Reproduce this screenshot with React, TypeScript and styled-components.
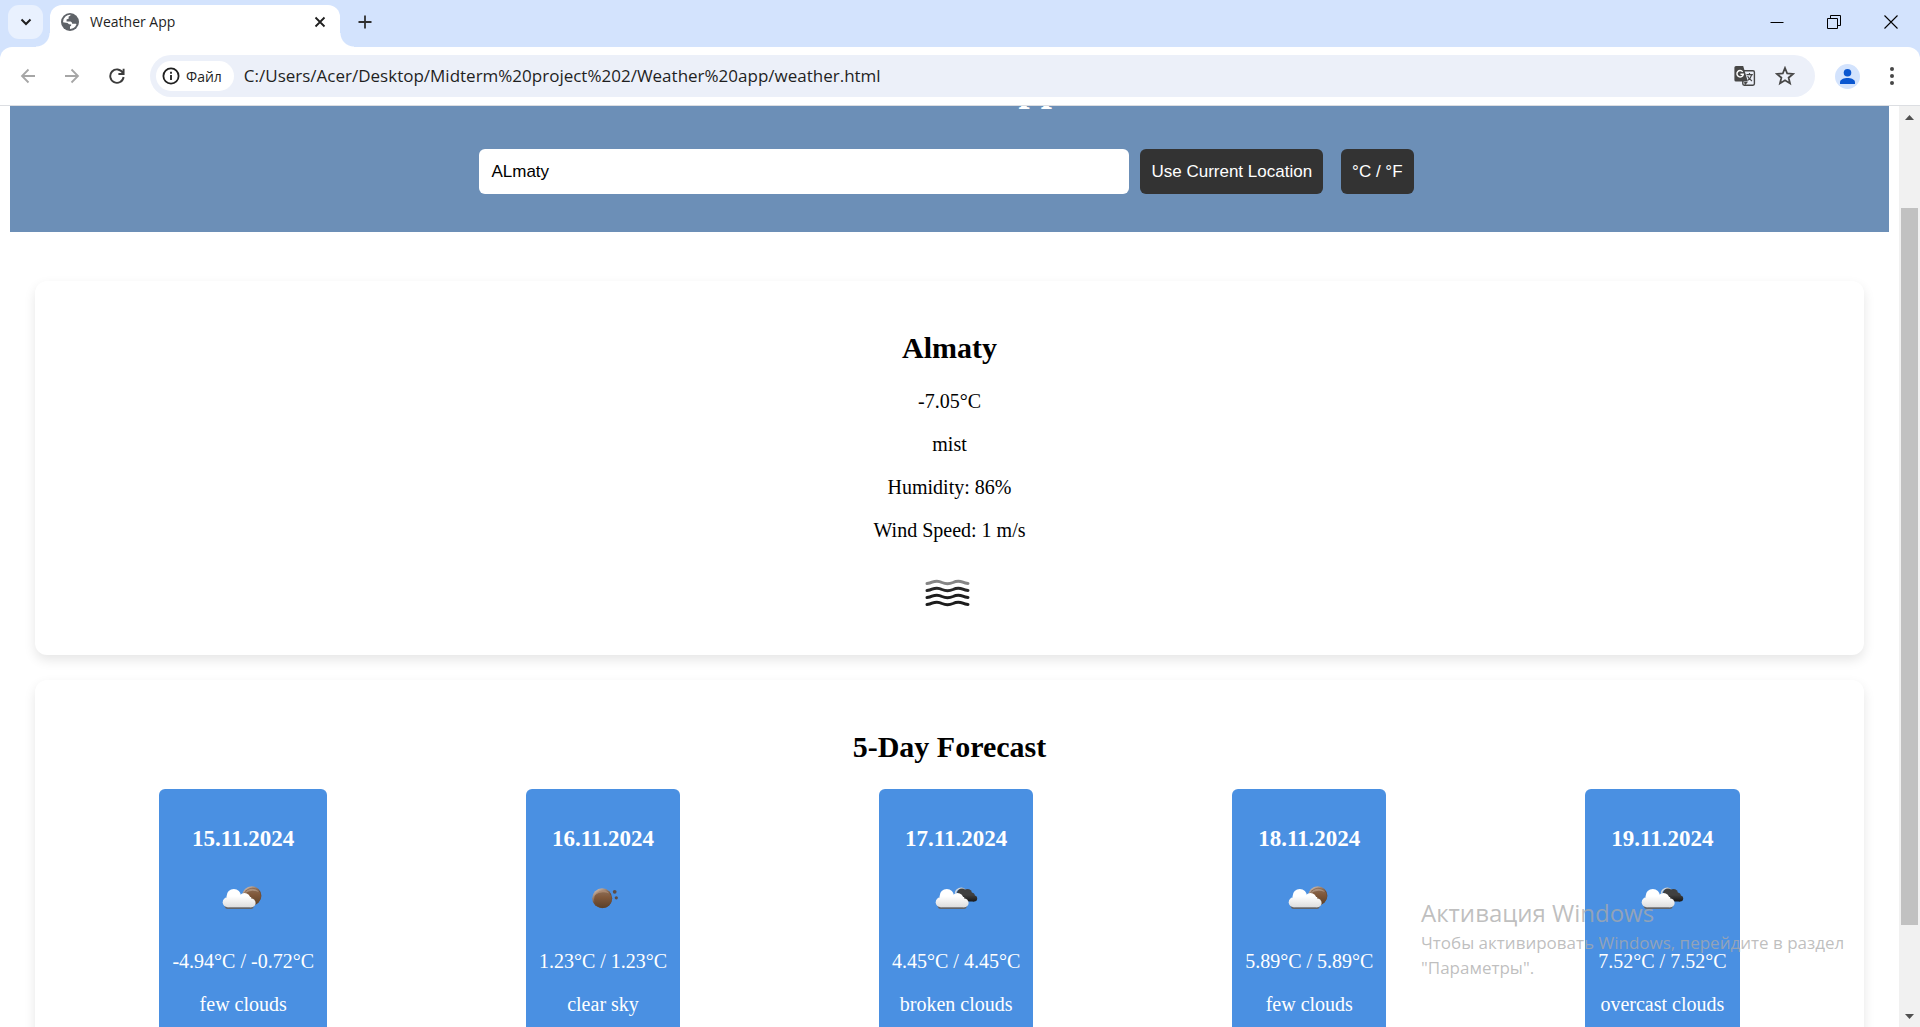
import React, { useLayoutEffect, useRef, useState } from "react";
import styled, { createGlobalStyle } from "styled-components";

const UI_FONT = `"Open Sans", "Noto Sans", sans-serif`;
const PAGE_FONT = `"Liberation Serif", "Times New Roman", serif`;
const CONTROL_FONT = `"Liberation Sans", Arial, sans-serif`;

const GlobalStyle = createGlobalStyle`
  *, *::before, *::after { box-sizing: border-box; }
  body { margin: 0; background: #fff; }
  button, input { font: inherit; border: 0; margin: 0; }
  button { cursor: pointer; }
`;

/* ---------- browser window ---------- */

const Window = styled.div`
  position: relative;
  display: flex;
  flex-direction: column;
  height: 100vh;
  overflow: hidden;
  font-family: ${UI_FONT};
  background: #d3e3fd;
`;

const TabStrip = styled.div`
  display: flex;
  align-items: flex-end;
  height: 47px;
  padding-left: 8px;
`;

const TabSearch = styled.button`
  display: grid;
  place-items: center;
  align-self: flex-start;
  width: 35px;
  height: 34px;
  margin: 5px 7px 0 0;
  padding: 0;
  border-radius: 11px;
  background: #e9f1fe;
`;

const Tab = styled.div`
  position: relative;
  display: flex;
  align-items: center;
  width: 290px;
  height: 42px;
  padding: 0 11px 8px 11px;
  border-radius: 12px 12px 0 0;
  background: #fff;

  &::before,
  &::after {
    content: "";
    position: absolute;
    bottom: 0;
    width: 14px;
    height: 14px;
  }
  &::before {
    right: 100%;
    background: radial-gradient(circle at 0 0, transparent 13px, #fff 14px);
  }
  &::after {
    left: 100%;
    background: radial-gradient(circle at 100% 0, transparent 13px, #fff 14px);
  }
`;

const TabTitle = styled.span`
  flex: 1;
  margin-left: 11px;
  font-size: 14px;
  line-height: 20px;
  color: #1f1f1f;
`;

const IconButton = styled.button<{ $w?: number; $h?: number }>`
  display: grid;
  place-items: center;
  width: ${(p) => p.$w ?? 24}px;
  height: ${(p) => p.$h ?? 24}px;
  padding: 0;
  background: transparent;
`;

const NewTab = styled(IconButton)`
  align-self: flex-start;
  margin: 10px 0 0 13px;
`;

const WindowControls = styled.div`
  display: flex;
  align-self: flex-start;
  margin-left: auto;
  padding-right: 1px;
`;

const Toolbar = styled.div`
  display: flex;
  align-items: center;
  height: 59px;
  flex: none;
  padding: 0 2px 0 6px;
  border-bottom: 1px solid #dcdee2;
  border-radius: 12px 12px 0 0;
  background: #fff;
`;

const Omnibox = styled.div`
  display: flex;
  flex: 1;
  align-items: center;
  height: 42px;
  margin: 0 14px 0 11px;
  padding: 0 18px 0 6px;
  border-radius: 21px;
  background: #ecf0f9;
`;

const SiteChip = styled.button`
  display: flex;
  align-items: center;
  gap: 6px;
  height: 30px;
  padding: 0 12px 0 6px;
  border-radius: 15px;
  background: #fff;
  font-size: 14px;
  font-weight: 500;
  color: #1f1f1f;
`;

const Address = styled.input`
  flex: 1;
  min-width: 0;
  padding: 0 10px;
  background: transparent;
  font-size: 17px;
  line-height: 24px;
  color: #1f1f1f;
  outline: none;
`;

const Viewport = styled.div`
  display: flex;
  flex: 1;
  min-height: 0;
  background: #fff;
`;

const Scroller = styled.div`
  flex: 1;
  overflow-y: scroll;
  scrollbar-width: none;
`;

const ScrollRail = styled.div`
  display: flex;
  flex-direction: column;
  align-items: center;
  width: 21px;
  background: #f1f1f1;
`;

const RailSpace = styled.div<{ $grow: number }>`
  flex: ${(p) => p.$grow} 1 0;
`;

const Thumb = styled.div`
  flex: 717 1 0;
  width: 17px;
  background: #c1c1c1;
`;

/* ---------- weather page ---------- */

const Page = styled.div`
  padding: 10px;
  font-family: ${PAGE_FONT};
  font-size: 20px;
  line-height: 23px;
  color: #000;
  text-align: center;
`;

const Header = styled.header`
  padding: 25px;
  background: #6c8fb7;
  color: #fff;
`;

const Title = styled.h1`
  margin: 26px 0 28px;
  font-size: 40px;
  line-height: 46px;
`;

const Search = styled.form`
  display: flex;
  justify-content: center;
  padding: 11px 0 13px;
  font-family: ${CONTROL_FONT};
  font-size: 17px;
`;

const CityInput = styled.input`
  width: 650px;
  height: 45px;
  margin-right: 11px;
  padding: 0 12px;
  border-radius: 6px;
  background: #fff;
  color: #000;
`;

const ActionButton = styled.button`
  height: 45px;
  margin-right: 18px;
  padding: 0 11px;
  border-radius: 6px;
  background: #333;
  color: #fff;

  &:last-child {
    margin-right: 6px;
  }
`;

const Main = styled.main`
  padding: 24px 25px 25px;
`;

const Card = styled.section`
  margin: 25px 0;
  padding: 25px;
  border-radius: 12px;
  background: #fff;
  box-shadow: 0 5px 12px rgba(0, 0, 0, 0.1);
`;

const CardTitle = styled.h2`
  margin: 25px 0;
  font-size: 30px;
  line-height: 34px;
`;

const Line = styled.p`
  margin: 20px 0;
`;

const IconSlot = styled.div`
  display: flex;
  justify-content: center;
  padding-bottom: 5px;

  svg {
    display: block;
  }
`;

const Days = styled.div`
  display: flex;
  justify-content: space-around;
`;

const Day = styled.article`
  padding: 13px;
  border-radius: 6px;
  background: #4a90e2;
  color: #fff;
`;

const DayDate = styled.h3`
  margin: 23px 0;
  font-size: 23px;
  line-height: 27px;
`;

/* ---------- activation notice ---------- */

const Activation = styled.aside`
  position: absolute;
  right: 69px;
  bottom: 47px;
  width: 430px;
  color: rgba(170, 170, 170, 0.75);
  font-size: 17px;
  line-height: 25px;
  pointer-events: none;
`;

const ActivationTitle = styled.div`
  font-size: 24px;
  line-height: 34px;
`;

/* ---------- icons ---------- */

const Stroke = ({ size, d, color = "#1f1f1f", w = 2 }: { size: number; d: string; color?: string; w?: number }) => (
  <svg width={size} height={size} viewBox={`0 0 ${size} ${size}`} fill="none" stroke={color} strokeWidth={w}>
    <path d={d} />
  </svg>
);

const Globe = () => (
  <svg width="18" height="18" viewBox="0 0 18 18">
    <circle cx="9" cy="9" r="9" fill="#5f6368" />
    <path d="M10.500 2 7.500 3.800 7.800 5.500 5.500 6.500 5.600 8.500H9.500q1.600.2 1.700 2.200h3.600q.8 0 .6.900A7 7 0 0 1 9 16v-2.600q1.500-.3 1.300-1.800L8 11.200 6.500 10 2 9.300A7.100 7.100 0 0 1 10.500 2Z" fill="#fff" />
    <path d="M9.500 2.200q3.200-.2 5 2.800l-1.500 2.200h-2.500V5.500H8.200Z" fill="#5f6368" />
    <path d="M2.200 9.800 5.500 13l1 2.600A7 7 0 0 1 2.200 9.800Z" fill="#5f6368" />
  </svg>
);

const InfoIcon = () => (
  <svg width="18" height="18" viewBox="0 0 18 18" fill="none" stroke="#1f1f1f" strokeWidth="1.8">
    <circle cx="9" cy="9" r="7.6" />
    <path d="M9 8v5M9 4.8v1.9" />
  </svg>
);

const TranslateIcon = () => (
  <svg width="22" height="22" viewBox="0 0 22 22" fill="none">
    <rect x="8.8" y="5.8" width="11.6" height="14.4" rx="1.4" stroke="#474747" strokeWidth="1.4" />
    <path d="M2 1h7.2l4.6 15.6H2A1.6 1.6 0 0 1 .4 15V2.600A1.600 1.600 0 0 1 2 1Z" fill="#474747" />
    <path d="M10 17h3.800L11 20.600Z" fill="#474747" />
    <path d="M8.700 6.800A3.200 3.200 0 1 0 9.300 9.300H6.500" stroke="#fff" strokeWidth="1.400" />
    <path d="M12.500 9.600h6.400M15.500 8v1.600M17.600 9.800c-.5 2.600-2 4.400-4 5.700M13.600 11.300c1 2 2.400 3.400 4.400 4.600" stroke="#474747" strokeWidth="1.200" />
  </svg>
);

const StarIcon = () => (
  <svg width="20" height="20" viewBox="0 0 20 20" fill="none" stroke="#474747" strokeWidth="1.800">
    <path d="m10 2 2.200 5.500 5.900.4-4.500 3.800 1.400 5.700-5-3.100-5 3.100 1.400-5.700-4.500-3.800 5.900-.4Z" />
  </svg>
);

const Avatar = () => (
  <svg width="25" height="25" viewBox="0 0 25 25">
    <circle cx="12.500" cy="12.500" r="12.500" fill="#d3e3fd" />
    <circle cx="12.500" cy="8.800" r="3.800" fill="#0b57d0" />
    <path d="M5 20v-1.800c0-2.800 4.200-4.200 7.500-4.200s7.500 1.400 7.500 4.200V20Z" fill="#0b57d0" />
  </svg>
);

const MenuDots = () => (
  <svg width="20" height="20" viewBox="0 0 20 20" fill="#474747">
    <circle cx="10" cy="3" r="2" />
    <circle cx="10" cy="10" r="2" />
    <circle cx="10" cy="17" r="2" />
  </svg>
);

const RailArrow = ({ down = false }: { down?: boolean }) => (
  <svg width="21" height="21" viewBox="0 0 21 21">
    <path d={down ? "M6 8h9l-4.500 5Z" : "M6 14h9l-4.500-5Z"} fill="#505050" />
  </svg>
);

const MistIcon = () => {
  const wave = (y: number) => `M9 ${y + 1.500}q3-.3 5-1.300 5.500-2.200 10 .3 5.500 2.400 11 0 5-2.500 9.800-.3 2.500 1.100 5.200 1.300`;
  return (
    <svg width="63" height="63" viewBox="0 0 63 63" fill="none" strokeLinecap="round" strokeWidth="3">
      <path d={wave(20)} stroke="#858585" />
      <path d={wave(27)} stroke="#262626" />
      <path d={wave(34)} stroke="#1c1c1c" />
      <path d={wave(41)} stroke="#1c1c1c" />
    </svg>
  );
};

const Gradients = ({ id }: { id: string }) => (
  <defs>
    <linearGradient id={`${id}-cloud`} gradientUnits="userSpaceOnUse" x1="0" y1="14" x2="0" y2="32">
      <stop offset="0.400" stopColor="#fff" />
      <stop offset="1" stopColor="#dedede" />
    </linearGradient>
    <linearGradient id={`${id}-moon`} x1="0" y1="0" x2="0" y2="1">
      <stop offset="0" stopColor="#8d6f59" />
      <stop offset="0.400" stopColor="#80583a" />
      <stop offset="1" stopColor="#5a4029" />
    </linearGradient>
    <linearGradient id={`${id}-rim`} x1="0" y1="0" x2="0.600" y2="1">
      <stop offset="0" stopColor="#e8d8cc" />
      <stop offset="0.600" stopColor="#6c4a32" />
    </linearGradient>
    <linearGradient id={`${id}-dark`} gradientUnits="userSpaceOnUse" x1="0" y1="13" x2="0" y2="27">
      <stop offset="0.500" stopColor="#404040" />
      <stop offset="1" stopColor="#151515" />
    </linearGradient>
  </defs>
);

type Sky = "few" | "clear" | "broken";

const SkyIcon = ({ kind, id }: { kind: Sky; id: string }) => (
  <svg width="50" height="50" viewBox="0 0 50 50">
    <Gradients id={id} />
    {kind === "few" && (
      <>
        <circle cx="33.800" cy="20.800" r="9.600" fill={`url(#${id}-rim)`} />
        <circle cx="34.200" cy="21.400" r="8.600" fill={`url(#${id}-moon)`} />
        <path d="M26.500 18.500q6-4.500 14.500-1.500a8.600 8.600 0 0 0-14.500 1.500Z" fill="#c9b5a6" opacity="0.500" />
      </>
    )}
    {kind === "clear" && (
      <>
        <circle cx="24.200" cy="23.300" r="10" fill={`url(#${id}-rim)`} />
        <circle cx="24.900" cy="24.200" r="8.800" fill={`url(#${id}-moon)`} />
        <path d="M17 20q6-4.500 14.500-1.500a8.800 8.800 0 0 0-14.500 1.500Z" fill="#c9a68c" opacity="0.500" />
        <circle cx="36.700" cy="16.800" r="1.900" fill="#5e4c43" />
        <circle cx="38.300" cy="22.800" r="1.600" fill="#5e4c43" />
      </>
    )}
    {kind === "broken" && (
      <>
        <path d="M24.500 18.500a5.500 5.500 0 0 1 9.500-3.500" fill="none" stroke="#d8d8d8" strokeWidth="1.500" />
        <g fill={`url(#${id}-dark)`}>
          <circle cx="31" cy="18.500" r="5" />
          <circle cx="36.500" cy="18.500" r="4.500" />
          <circle cx="40" cy="21.500" r="4" />
          <circle cx="43.200" cy="23.500" r="3" />
          <path d="M31 19h9l3.200 7.500H31Z" />
        </g>
      </>
    )}
    {kind !== "clear" && (
      <>
        <path d="M6.500 30.500H36q-.5 3.500-3 3.500H9.500q-2.500 0-3-3.500Z" fill="#626469" />
        <g fill={`url(#${id}-cloud)`}>
          <circle cx="15.800" cy="21.200" r="7.200" />
          <circle cx="9.700" cy="27.300" r="5" />
          <circle cx="26.500" cy="24" r="6" />
          <circle cx="33.200" cy="27.900" r="4.400" />
          <path d="M9.700 22h23.500v10.300H9.700Z" />
        </g>
      </>
    )}
  </svg>
);

/* ---------- content ---------- */

const forecast: { date: string; sky: Sky; temps: string; text: string }[] = [
  { date: "15.11.2024", sky: "few", temps: "-4.94°C / -0.72°C", text: "few clouds" },
  { date: "16.11.2024", sky: "clear", temps: "1.23°C / 1.23°C", text: "clear sky" },
  { date: "17.11.2024", sky: "broken", temps: "4.45°C / 4.45°C", text: "broken clouds" },
  { date: "18.11.2024", sky: "few", temps: "5.89°C / 5.89°C", text: "few clouds" },
  { date: "19.11.2024", sky: "broken", temps: "7.52°C / 7.52°C", text: "overcast clouds" },
];

const WeatherPage = () => {
  const [city, setCity] = useState("ALmaty");
  return (
    <Page>
      <Header>
        <Title>Weather App</Title>
        <Search onSubmit={(e) => e.preventDefault()}>
          <CityInput aria-label="City" value={city} onChange={(e) => setCity(e.target.value)} />
          <ActionButton type="button">Use Current Location</ActionButton>
          <ActionButton type="button">°C / °F</ActionButton>
        </Search>
      </Header>
      <Main>
        <Card>
          <CardTitle>Almaty</CardTitle>
          <Line>-7.05°C</Line>
          <Line>mist</Line>
          <Line>Humidity: 86%</Line>
          <Line>Wind Speed: 1 m/s</Line>
          <IconSlot>
            <MistIcon />
          </IconSlot>
        </Card>
        <Card>
          <CardTitle>5-Day Forecast</CardTitle>
          <Days>
            {forecast.map((day, i) => (
              <Day key={day.date}>
                <DayDate>{day.date}</DayDate>
                <IconSlot>
                  <SkyIcon kind={day.sky} id={`day${i}`} />
                </IconSlot>
                <Line>{day.temps}</Line>
                <Line>{day.text}</Line>
              </Day>
            ))}
          </Days>
        </Card>
      </Main>
    </Page>
  );
};

export default function App() {
  const scroller = useRef<HTMLDivElement>(null);
  const [url, setUrl] = useState("C:/Users/Acer/Desktop/Midterm%20project%202/Weather%20app/weather.html");

  useLayoutEffect(() => {
    if (scroller.current) scroller.current.scrollTop = 103;
  }, []);

  return (
    <Window>
      <GlobalStyle />
      <TabStrip>
        <TabSearch aria-label="Search tabs">
          <Stroke size={12} d="M1.500 3.500 6 8l4.500-4.500" />
        </TabSearch>
        <Tab>
          <Globe />
          <TabTitle>Weather App</TabTitle>
          <IconButton $w={18} aria-label="Close tab">
            <Stroke size={12} d="M1.500 1.500l9 9M10.500 1.500l-9 9" w={1.8} />
          </IconButton>
        </Tab>
        <NewTab aria-label="New tab">
          <Stroke size={14} d="M7 .5v13M.5 7h13" color="#303030" w={1.8} />
        </NewTab>
        <WindowControls>
          <IconButton $w={56} $h={43} aria-label="Minimize">
            <Stroke size={14} d="M.5 7.500h13" color="#000" w={1} />
          </IconButton>
          <IconButton $w={57} $h={43} aria-label="Restore">
            <Stroke size={14} d="M.5 3.500h10v10h-10ZM3.500 3.500v-3h10v10h-3" color="#000" w={1} />
          </IconButton>
          <IconButton $w={57} $h={43} aria-label="Close">
            <Stroke size={14} d="M.5.5l13 13M13.500.5l-13 13" color="#000" w={1.1} />
          </IconButton>
        </WindowControls>
      </TabStrip>
      <Toolbar>
        <IconButton $w={44} aria-label="Back">
          <Stroke size={16} d="M15 8H2M8.500 1.500 2 8l6.500 6.500" color="#a6a6a6" w={1.8} />
        </IconButton>
        <IconButton $w={44} aria-label="Forward">
          <Stroke size={16} d="M1 8h13M7.500 1.500 14 8l-6.500 6.500" color="#a6a6a6" w={1.8} />
        </IconButton>
        <IconButton $w={45} aria-label="Reload">
          <Stroke size={16} d="M13.800 4.800A6.700 6.700 0 1 0 14.600 9M14.600.8v5.200H9.400" color="#3c3c3c" w={1.9} />
        </IconButton>
        <Omnibox>
          <SiteChip>
            <InfoIcon />
            Файл
          </SiteChip>
          <Address aria-label="Address" value={url} onChange={(e) => setUrl(e.target.value)} />
          <IconButton $w={56} $h={40} aria-label="Translate">
            <TranslateIcon />
          </IconButton>
          <IconButton $w={24} $h={40} aria-label="Bookmark">
            <StarIcon />
          </IconButton>
        </Omnibox>
        <IconButton $w={36} $h={36} aria-label="Profile">
          <Avatar />
        </IconButton>
        <IconButton $w={53} $h={36} aria-label="Menu">
          <MenuDots />
        </IconButton>
      </Toolbar>
      <Viewport>
        <Scroller ref={scroller}>
          <WeatherPage />
        </Scroller>
        <ScrollRail>
          <RailArrow />
          <RailSpace $grow={81} />
          <Thumb />
          <RailSpace $grow={81} />
          <RailArrow down />
        </ScrollRail>
      </Viewport>
      <Activation>
        <ActivationTitle>Активация Windows</ActivationTitle>
        Чтобы активировать Windows, перейдите в раздел "Параметры".
      </Activation>
    </Window>
  );
}
